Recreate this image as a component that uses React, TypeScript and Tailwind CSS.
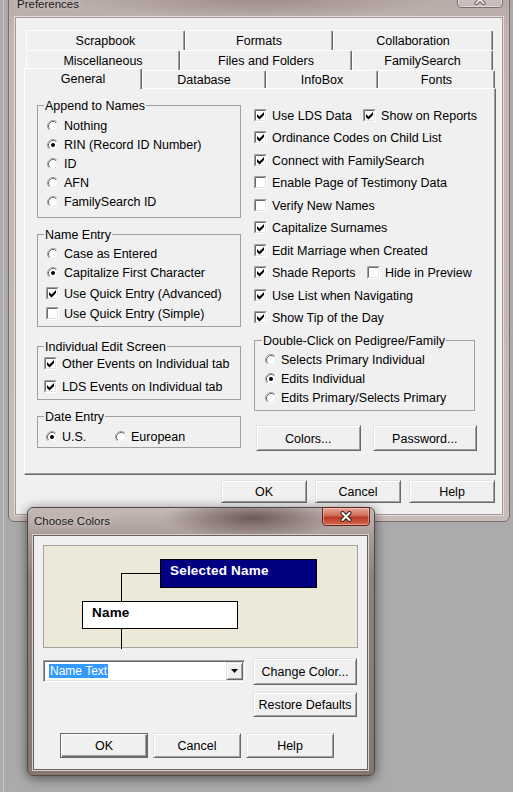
import type { ReactNode } from "react";

const raised =
  "border border-t-[#e3e3e3] border-l-[#e3e3e3] border-r-[#696969] border-b-[#696969] bg-[#f0f0f0] shadow-[inset_1px_1px_0_#fff,inset_-1px_-1px_0_#a0a0a0]";

const tabBase =
  "flex items-center justify-center rounded-t-[2px] border-l border-t border-r border-l-white border-t-white border-r-[#696969] bg-[#f0f0f0] shadow-[inset_-1px_0_0_#a0a0a0]";

function RadioMark({ on = false }: { on?: boolean }) {
  return (
    <svg width="12" height="12" viewBox="0 0 12 12" className="shrink-0">
      <circle cx="6" cy="6" r="5.5" fill="#fff" />
      <path d="M2.11 9.89A5.5 5.5 0 0 1 9.89 2.11" fill="none" stroke="#a0a0a0" />
      <path d="M2.82 9.18A4.5 4.5 0 0 1 9.18 2.82" fill="none" stroke="#696969" />
      <path d="M9.18 2.82A4.5 4.5 0 0 1 2.82 9.18" fill="none" stroke="#e3e3e3" />
      {on && <circle cx="6" cy="6" r="2" fill="#000" />}
    </svg>
  );
}

function CheckMark({ on = false }: { on?: boolean }) {
  return (
    <svg width="13" height="13" viewBox="0 0 13 13" className="shrink-0">
      <rect x="0" y="0" width="13" height="13" fill="#fff" />
      <path d="M0.5 12.5V0.5H12.5" fill="none" stroke="#a0a0a0" />
      <path d="M1.5 11.5V1.5H11.5" fill="none" stroke="#696969" />
      <path d="M1.5 11.5H11.5V1.5" fill="none" stroke="#e3e3e3" />
      {on && <path d="M3 5L5.5 7.5L10 3V6L5.5 10.5L3 8Z" fill="#000" />}
    </svg>
  );
}

function Option({
  kind,
  label,
  on,
  className = "",
}: {
  kind: "radio" | "check";
  label: string;
  on?: boolean;
  className?: string;
}) {
  return (
    <div className={`flex items-center whitespace-nowrap ${className}`}>
      {kind === "radio" ? <RadioMark on={on} /> : <CheckMark on={on} />}
      <span className="translate-y-[1px]">{label}</span>
    </div>
  );
}

function Group({ title, className = "", children }: { title: string; className?: string; children: ReactNode }) {
  return (
    <fieldset className={`m-0 min-w-0 border border-[#a0a0a0] p-0 ${className}`}>
      <legend className="ml-[6px] px-[1px] leading-[15px]">
        <span className="inline-block translate-y-[1px]">{title}</span>
      </legend>
      {children}
    </fieldset>
  );
}

function Button({ label, className = "" }: { label: string; className?: string }) {
  return (
    <button type="button" className={`flex items-center justify-center ${raised} ${className}`}>
      <span className="translate-y-[1px]">{label}</span>
    </button>
  );
}

function Tab({ label, className = "" }: { label: string; className?: string }) {
  return (
    <div className={`${tabBase} ${className}`}>
      <span className="translate-y-[1px]">{label}</span>
    </div>
  );
}

function XGlyph({ dim = false }: { dim?: boolean }) {
  return (
    <svg width="14" height="11" viewBox="0 0 14 11">
      <path
        d="M3.5 2L10.5 9M10.5 2L3.5 9"
        stroke={dim ? "#6f6462" : "#3a2220"}
        strokeWidth="4"
        strokeLinecap="round"
      />
      <path d="M3.5 2L10.5 9M10.5 2L3.5 9" stroke={dim ? "#e9e4e3" : "#fff"} strokeWidth="2" strokeLinecap="round" />
    </svg>
  );
}

function PreferencesWindow() {
  return (
    <div className="absolute left-[8px] top-[-11px] flex h-[533px] w-[502px] flex-col rounded-[6px] border border-[#7b6e6b] bg-[radial-gradient(ellipse_170px_20px_at_250px_10px,rgba(110,90,85,0.35),transparent),linear-gradient(#b5a7a4,#c2b5b2_40px,#c8bcb9)] px-[6px] pb-[6px]">
      <div className="relative flex h-[27px] shrink-0 items-center pl-[2px] pt-[2px] text-[11.5px] text-[#1b1b1b] [text-shadow:0_0_6px_rgba(255,255,255,0.7)]">
        Preferences
        <div className="absolute right-0 top-0 flex h-[18px] w-[46px] items-center justify-center rounded-b-[4px] border border-[#7a6d6a] bg-[linear-gradient(#d6cdcb,#c4b8b5)] shadow-[inset_0_0_0_1px_rgba(255,255,255,0.45)]">
          <XGlyph dim />
        </div>
      </div>

      <div className="flex-1 border border-[#a69995] bg-[#f0f0f0] shadow-[0_0_0_1px_#e2dbd9]">
        <div className="ml-[8px] mt-[12px] w-[472px]">
          <div className="ml-[2px] flex h-[20px]">
            <Tab label="Scrapbook" className="w-[159px]" />
            <Tab label="Formats" className="w-[148px]" />
            <Tab label="Collaboration" className="w-[160px]" />
          </div>
          <div className="ml-[2px] flex h-[20px]">
            <Tab label="Miscellaneous" className="w-[154px]" />
            <Tab label="Files and Folders" className="w-[172px]" />
            <Tab label="FamilySearch" className="w-[141px]" />
          </div>
          <div className="-mt-[2px] flex h-[20px] items-end">
            <Tab label="General" className="relative z-10 -mb-[1px] h-[21px] w-[118px] pb-[2px]" />
            <Tab label="Database" className="h-[18px] w-[124px]" />
            <Tab label="InfoBox" className="h-[18px] w-[112px]" />
            <Tab label="Fonts" className="h-[18px] w-[117px]" />
          </div>

          <div className="flex h-[387px] w-[472px] border border-b-[#696969] border-l-white border-r-[#696969] border-t-white bg-[#f0f0f0] pl-[12px] pt-[9px] shadow-[inset_-1px_-1px_0_#a0a0a0]">
            <div className="w-[204px]">
              <Group title="Append to Names">
                <div className="pb-[6px] pt-[3px]">
                  <Option kind="radio" label="Nothing" className="ml-[9px] h-[19px] gap-[5px]" />
                  <Option kind="radio" on label="RIN (Record ID Number)" className="ml-[9px] h-[19px] gap-[5px]" />
                  <Option kind="radio" label="ID" className="ml-[9px] h-[19px] gap-[5px]" />
                  <Option kind="radio" label="AFN" className="ml-[9px] h-[19px] gap-[5px]" />
                  <Option kind="radio" label="FamilySearch ID" className="ml-[9px] h-[19px] gap-[5px]" />
                </div>
              </Group>

              <Group title="Name Entry" className="mt-[9px]">
                <div className="pb-[4px] pt-[2px]">
                  <Option kind="radio" label="Case as Entered" className="ml-[9px] h-[19px] gap-[5px]" />
                  <Option kind="radio" on label="Capitalize First Character" className="ml-[9px] h-[19px] gap-[5px]" />
                  <Option kind="check" on label="Use Quick Entry (Advanced)" className="ml-[8px] h-[22px] gap-[5px]" />
                  <Option kind="check" label="Use Quick Entry (Simple)" className="ml-[8px] h-[18px] gap-[5px]" />
                </div>
              </Group>

              <Group title="Individual Edit Screen" className="mt-[12px]">
                <div className="pb-[3px]">
                  <Option kind="check" on label="Other Events on Individual tab" className="ml-[6px] h-[19px] gap-[5px]" />
                  <Option kind="check" on label="LDS Events on Individual tab" className="ml-[6px] mt-[4px] h-[19px] gap-[5px]" />
                </div>
              </Group>

              <Group title="Date Entry" className="mt-[9px]">
                <div className="flex pb-[1px] pt-[3px]">
                  <Option kind="radio" on label="U.S." className="ml-[8px] h-[19px] w-[69px] gap-[4px]" />
                  <Option kind="radio" label="European" className="h-[19px] gap-[4px]" />
                </div>
              </Group>
            </div>

            <div className="ml-[13px] w-[223px] pt-[6px]">
              <div className="flex h-[22.5px]">
                <Option kind="check" on label="Use LDS Data" className="w-[113px] gap-[5px]" />
                <Option kind="check" on label="Show on Reports" className="gap-[5px]" />
              </div>
              <Option kind="check" on label="Ordinance Codes on Child List" className="h-[22.5px] gap-[5px]" />
              <Option kind="check" on label="Connect with FamilySearch" className="h-[22.5px] gap-[5px]" />
              <Option kind="check" label="Enable Page of Testimony Data" className="h-[22.5px] gap-[5px]" />
              <Option kind="check" label="Verify New Names" className="h-[22.5px] gap-[5px]" />
              <Option kind="check" on label="Capitalize Surnames" className="h-[22.5px] gap-[5px]" />
              <Option kind="check" on label="Edit Marriage when Created" className="h-[22.5px] gap-[5px]" />
              <div className="flex h-[22.5px]">
                <Option kind="check" on label="Shade Reports" className="w-[113px] gap-[5px]" />
                <Option kind="check" label="Hide in Preview" className="gap-[5px]" />
              </div>
              <Option kind="check" on label="Use List when Navigating" className="h-[22.5px] gap-[5px]" />
              <Option kind="check" on label="Show Tip of the Day" className="h-[22.5px] gap-[5px]" />

              <fieldset className="m-0 mt-[4px] w-[221px] min-w-0 border border-[#a0a0a0] p-0">
                <legend className="ml-[7px] px-[1px] leading-[15px]">
                  <span className="inline-block translate-y-[1px]">Double-Click on Pedigree/Family</span>
                </legend>
                <div className="pb-[3px] pt-[2px]">
                  <Option kind="radio" label="Selects Primary Individual" className="ml-[10px] h-[19px] gap-[4px]" />
                  <Option kind="radio" on label="Edits Individual" className="ml-[10px] h-[19px] gap-[4px]" />
                  <Option kind="radio" label="Edits Primary/Selects Primary" className="ml-[10px] h-[19px] gap-[4px]" />
                </div>
              </fieldset>

              <div className="ml-[2px] mt-[14px] flex gap-[12px]">
                <Button label="Colors..." className="h-[26px] w-[105px]" />
                <Button label="Password..." className="h-[26px] w-[105px]" />
              </div>
            </div>
          </div>
        </div>

        <div className="mt-[5px] flex justify-end gap-[8px] pr-[7px]">
          <Button label="OK" className="h-[23px] w-[86px]" />
          <Button label="Cancel" className="h-[23px] w-[86px]" />
          <Button label="Help" className="h-[23px] w-[86px]" />
        </div>
      </div>
    </div>
  );
}

function ChooseColorsWindow() {
  return (
    <div className="absolute left-[27px] top-[507px] flex h-[269px] w-[348px] flex-col rounded-[6px] border border-[#544846] bg-[radial-gradient(ellipse_90px_20px_at_225px_10px,rgba(95,75,70,0.85),transparent),linear-gradient(#c6bab7,#ab9c99_27px,#8e7f7c_70px,#85766f)] pb-[5px] pl-[5px] pr-[6px] shadow-[0_2px_12px_rgba(0,0,0,0.55)]">
      <div className="relative flex h-[27px] shrink-0 items-center pl-[1px] text-[11.5px] text-[#1b1b1b] [text-shadow:0_0_6px_rgba(255,255,255,0.8)]">
        Choose Colors
        <div className="absolute right-[-2px] top-[-1px] flex h-[19px] w-[48px] items-center justify-center rounded-b-[4px] border border-[#5a2620] bg-[linear-gradient(#e8a89b,#d06a55_45%,#b83a25_55%,#d4684c)] shadow-[inset_0_0_0_1px_rgba(255,220,210,0.45)]">
          <XGlyph />
        </div>
      </div>

      <div className="flex-1 border border-[#6b5f5c] bg-[#f0f0f0] shadow-[0_0_0_1px_#d9d1cf]">
        <div className="ml-[9px] mt-[9px]">
          <div className="relative h-[103px] w-[315px] border border-[#a0a0a0] bg-[#ece9d8]">
            <div className="absolute left-[77px] top-[27px] h-[76px] w-[1px] bg-black" />
            <div className="absolute left-[77px] top-[27px] h-[1px] w-[39px] bg-black" />
            <div className="absolute left-[116px] top-[13px] h-[29px] w-[157px] border border-black bg-[#000080] pl-[9px] pt-[3px] text-[13.5px] font-bold leading-[16px] tracking-[0.2px] text-white">
              Selected Name
            </div>
            <div className="absolute left-[38px] top-[55px] h-[28px] w-[156px] border border-black bg-white pl-[9px] pt-[3px] text-[13.5px] font-bold leading-[16px] tracking-[0.2px]">
              Name
            </div>
          </div>

          <div className="mt-[10px] flex items-start">
            <div className="mt-[2px] flex h-[22px] w-[202px] border border-b-white border-l-[#a0a0a0] border-r-white border-t-[#a0a0a0] bg-white p-[1px] shadow-[inset_1px_1px_0_#696969,inset_-1px_-1px_0_#e3e3e3]">
              <div className="flex flex-1 items-center pl-[4px]">
                <span className="bg-[#3399ff] px-[1px] text-[12px] leading-[14px] text-white">Name Text</span>
              </div>
              <div className={`flex w-[17px] items-center justify-center ${raised}`}>
                <svg width="7" height="4" viewBox="0 0 7 4">
                  <path d="M0 0H7L3.5 4Z" fill="#000" />
                </svg>
              </div>
            </div>
            <Button label="Change Color..." className="ml-[8px] h-[27px] w-[104px]" />
          </div>

          <Button label="Restore Defaults" className="ml-[210px] mt-[7px] h-[25px] w-[104px]" />

          <div className="ml-[17px] mt-[16px] flex gap-[5px]">
            <button
              type="button"
              className="flex h-[25px] w-[88px] items-center justify-center border border-[#696969] bg-[#f0f0f0] shadow-[inset_1px_1px_0_#fff,inset_-1px_-1px_0_#696969,inset_-2px_-2px_0_#a0a0a0]"
            >
              <span className="translate-y-[1px]">OK</span>
            </button>
            <Button label="Cancel" className="h-[25px] w-[88px]" />
            <Button label="Help" className="h-[25px] w-[88px]" />
          </div>
        </div>
      </div>
    </div>
  );
}

export default function App() {
  return (
    <div className="relative h-[792px] w-[513px] overflow-hidden bg-[#ababab] font-['Liberation_Sans',Arial,sans-serif] text-[12.5px] leading-[15px] text-black">
      <div className="absolute left-[3px] top-0 h-full w-[1px] bg-[#c6c6c6]" />
      <PreferencesWindow />
      <ChooseColorsWindow />
    </div>
  );
}
